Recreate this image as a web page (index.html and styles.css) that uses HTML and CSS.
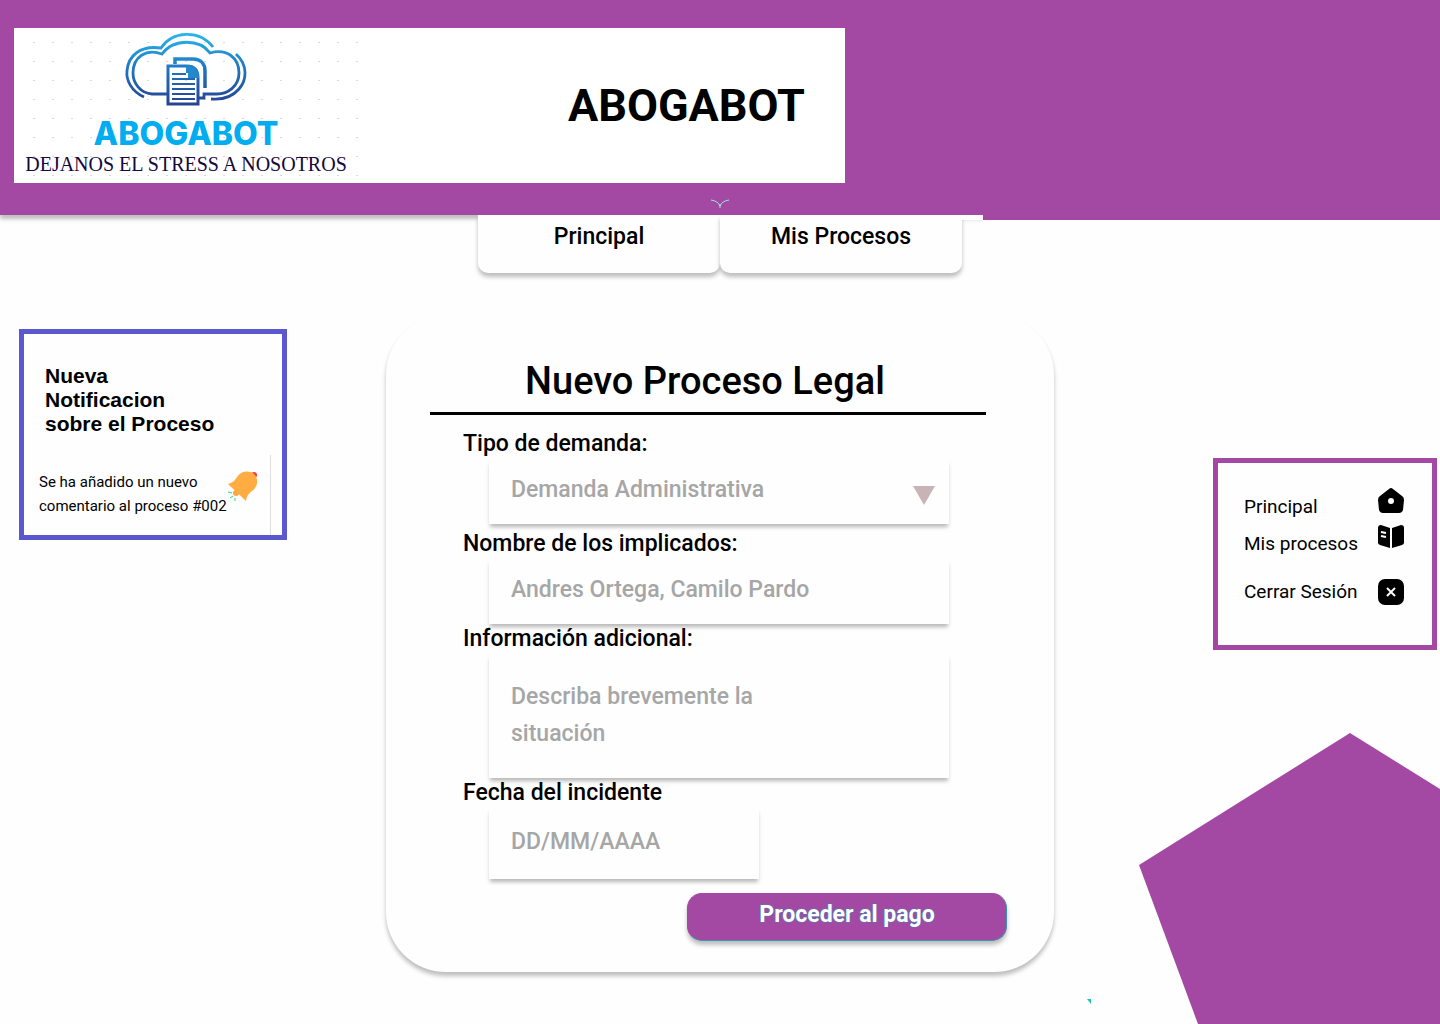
FILE: index.html
```html
<!DOCTYPE html>
<html lang="es">
<head>
<meta charset="utf-8">
<meta name="viewport" content="width=device-width, initial-scale=1">
<title>Abogabot - Nuevo Proceso Legal</title>
<link rel="stylesheet" href="styles.css">
</head>
<body>
<div class="page">
  <header class="header">
    <div class="brand">
      <div class="logo">
        <svg class="logo-mark" viewBox="0 0 132 84" width="132" height="84" aria-hidden="true">
          <defs>
            <linearGradient id="sky" gradientUnits="userSpaceOnUse" x1="0" y1="6" x2="0" y2="78">
              <stop offset="0" stop-color="#29b5ec"/>
              <stop offset="0.5" stop-color="#1f73c0"/>
              <stop offset="1" stop-color="#27408f"/>
            </linearGradient>
          </defs>
          <g fill="none" stroke="url(#sky)" stroke-width="2.8">
            <path d="M24 69C11 63 6 52 7 43C8 28 20 17 41 20C52 3 79 1 93 19"/>
            <path d="M47 66H32C20 65 13 55 13 45C13 29 26 20 42 26C54 10 80 11 90 25C107 20 119 30 119 45C119 58 108 66 97 66H84V70H79"/>
            <path d="M116 26C128 37 127 52 119 61C112 69 102 72 91 71"/>
            <path d="M55 36V31H73C81 31 85 36 85 43V60" stroke-width="3.5"/>
            <path d="M48 60V38H67C75 38 78 43 78 50V76H48V59" stroke-width="3"/>
          </g>
          <path d="M66 37C75 37 79 43 79 50H68V45H66Z" fill="#2488cd"/>
          <path d="M52 46H66M52 51H75M52 56H75M52 61H75M52 66H75M52 71H75" stroke="url(#sky)" stroke-width="2"/>
        </svg>
        <span class="logo-name">ABOGABOT</span>
        <span class="logo-tagline">DEJANOS EL STRESS A NOSOTROS</span>
      </div>
      <h1 class="brand-title">ABOGABOT</h1>
    </div>
    <svg class="header-notch" viewBox="0 0 20 10" width="20" height="10" aria-hidden="true">
      <path d="M1 1Q8 2 10 7Q12 2 19 1M10 5V9" fill="none" stroke="#a5e3e0" stroke-width="1"/>
    </svg>
  </header>

  <nav class="tabs">
    <a class="tab" href="#principal">Principal</a>
    <a class="tab" href="#procesos">Mis Procesos</a>
  </nav>

  <main class="main">
    <aside class="notice">
      <h2 class="notice-title">Nueva<br>Notificacion<br>sobre el Proceso</h2>
      <div class="notice-body">
        <p class="notice-text">Se ha añadido un nuevo<br>comentario al proceso #002</p>
        <svg class="bell" viewBox="0 0 32 32" width="32" height="32" aria-hidden="true">
          <circle cx="27" cy="5" r="3" fill="#f23b4d"/>
          <circle cx="9" cy="23" r="3" fill="#ffa73b"/>
          <path d="M1 14C7 12 8 10 10 7C14 1 22 0 27 4C32 9 31 17 25 21C21 24 20 26 19 31Z" fill="#ffad42"/>
          <path d="M1 22L5 23M3 28L6 26M8 31V28" stroke="#2fd38a" stroke-width="1" fill="none"/>
        </svg>
      </div>
    </aside>

    <form class="form">
      <h2 class="form-title">Nuevo Proceso Legal</h2>
      <div class="field field-type">
        <label for="tipo">Tipo de demanda:</label>
        <div class="select-wrap">
          <select class="control" id="tipo"><option>Demanda Administrativa</option></select>
          <svg class="arrow" viewBox="0 0 22 19" width="22" height="19" aria-hidden="true"><path d="M0 0H22L11 19Z" fill="#c8b4b5"/></svg>
        </div>
      </div>
      <div class="field">
        <label for="nombres">Nombre de los implicados:</label>
        <input class="control" id="nombres" type="text" placeholder="Andres Ortega, Camilo Pardo">
      </div>
      <div class="field">
        <label for="info">Información adicional:</label>
        <textarea class="control control-area" id="info" placeholder="Describa brevemente la situación"></textarea>
      </div>
      <div class="field">
        <label for="fecha">Fecha del incidente</label>
        <input class="control control-date" id="fecha" type="text" placeholder="DD/MM/AAAA">
      </div>
      <button class="submit" type="button">Proceder al pago</button>
    </form>

    <aside class="menu">
      <a class="menu-item" href="#principal">Principal
        <svg viewBox="0 0 26 26" width="26" height="26" aria-hidden="true"><path fill-rule="evenodd" d="M11 1Q13 -1 15 1L24 8Q26 9 26 12L25 22Q24 25 21 25H5Q2 25 1 22L0 12Q0 9 2 8ZM13 10A3 3 0 1 0 13 16A3 3 0 1 0 13 10Z"/></svg>
      </a>
      <a class="menu-item" href="#procesos">Mis procesos
        <svg viewBox="0 0 26 26" width="26" height="26" aria-hidden="true"><path d="M0 3Q0 0 3 0L12 3V23L2 20Q0 19 0 18ZM14 3L23 0Q26 0 26 3V18Q26 19 24 20L14 23Z"/><path d="M3 7L8 8M3 11L8 12" stroke="#fff" stroke-width="2"/></svg>
      </a>
      <a class="menu-item menu-exit" href="#salir">Cerrar Sesión
        <svg viewBox="0 0 26 26" width="26" height="26" aria-hidden="true"><rect width="26" height="26" rx="7"/><path d="M9 9L17 17M17 9L9 17" stroke="#fff" stroke-width="2"/></svg>
      </a>
    </aside>
  </main>

  <svg class="pentagon" viewBox="0 0 301 291" width="301" height="291" aria-hidden="true"><path d="M211 0L301 56V291H59L0 132Z" fill="#a349a3"/></svg>
  <svg class="speck" viewBox="0 0 4 5" width="4" height="5" aria-hidden="true"><path d="M0 0H4V5Z" fill="#14c4b4"/></svg>
</div>
</body>
</html>
```
FILE: styles.css
```css
* { box-sizing: border-box; }

body {
  margin: 0;
  background: #fefefe;
  color: #000;
  font-family: Roboto, "Open Sans", sans-serif;
}

.page {
  position: relative;
  min-height: 100vh;
  overflow: hidden;
}

.header {
  position: relative;
  padding: 28px 14px 32px;
  background: #a349a3;
  box-shadow: 0 4px 4px rgba(0, 0, 0, 0.25);
}

/* the right part of the bar hangs a little lower */
.header::after {
  content: "";
  position: absolute;
  top: 100%;
  right: 0;
  width: 457px;
  height: 5px;
  background: #a349a3;
  box-shadow: 0 4px 0 #fefefe;
}

.brand {
  display: flex;
  align-items: center;
  justify-content: space-between;
  max-width: 831px;
  min-height: 155px;
  padding: 0 40px 0 10px;
  background: #fff;
}

.logo {
  display: flex;
  flex-direction: column;
  align-items: center;
  width: 334px;
  height: 155px;
  padding-right: 10px;
  /* faint grid of small dashes */
  background-image: conic-gradient(from 270deg at 2px 1px, #d9d9d9 90deg, transparent 0);
  background-size: 19px 19px;
  background-position: 9px 14px;
}

.logo-mark { flex: none; }

.logo-name {
  margin-top: 4px;
  color: #00aeef;
  font: 800 32px/36px Inter, sans-serif;
}

.logo-tagline {
  color: #14083c;
  font: 20px/24px "Liberation Serif", serif;
  white-space: nowrap;
}

.brand-title {
  margin: 0;
  font-size: 45px;
  font-weight: 700;
  line-height: 56px;
}

.header-notch {
  position: absolute;
  bottom: 6px;
  left: calc(50% - 10px);
}

.tabs {
  position: relative;
  display: flex;
  width: 484px;
  margin: 0 auto;
}

.tabs::after {
  content: "";
  position: absolute;
  left: 100%;
  width: 21px;
  height: 5px;
  background: #fefefe;
}

.tab {
  flex: 1;
  height: 58px;
  border-radius: 0 0 10px 10px;
  background: #fefefe;
  box-shadow: 0 4px 4px rgba(0, 0, 0, 0.25);
  color: #000;
  font-size: 23px;
  font-weight: 500;
  line-height: 44px;
  text-align: center;
  text-decoration: none;
}

.main {
  position: relative;
  z-index: 1;
  display: grid;
  grid-template-columns: 1fr minmax(auto, 668px) 1fr;
  align-items: start;
  padding: 42px 0 52px;
}

.notice {
  width: 268px;
  margin: 14px 0 0 19px;
  padding: 30px 11px 0 15px;
  border: 5px solid #5b58cf;
}

.notice-title {
  margin: 0 0 0 6px;
  font: 700 21px/24px "Liberation Sans", sans-serif;
}

.notice-body {
  display: flex;
  align-items: flex-start;
  height: 80px;
  margin-top: 19px;
  padding-top: 15px;
  border-right: 1px solid #dedede;
}

.notice-text {
  flex: none;
  width: 188px;
  margin: 0;
  font-size: 15px;
  line-height: 24px;
  white-space: nowrap;
}

.bell { flex: none; }

.form {
  display: flex;
  flex-direction: column;
  min-height: 657px;
  padding: 39px 47px 31px 44px;
  border-radius: 60px;
  background: #fefefe;
  box-shadow: 0 4px 4px rgba(0, 0, 0, 0.25);
}

.form-title {
  width: 556px;
  margin: 0 0 14px;
  padding: 0 6px 4px 0;
  border-bottom: 3px solid #000;
  font-size: 38px;
  font-weight: 500;
  line-height: 54px;
  text-align: center;
}

.field {
  display: flex;
  flex-direction: column;
  padding-left: 33px;
  font-size: 23px;
  font-weight: 500;
  line-height: 30px;
}

.field-type { margin-bottom: 5px; }

.select-wrap { position: relative; width: 460px; margin-left: 26px; }

.control {
  display: block;
  width: 460px;
  height: 65px;
  margin: 0 0 0 26px;
  padding: 0 22px 4px;
  border: 0;
  border-radius: 0;
  outline: 0;
  background: #fefefe;
  box-shadow: 0 4px 4px -1px rgba(0, 0, 0, 0.28);
  color: #a6a6a6;
  font: inherit;
  appearance: none;
  resize: none;
}

.control::placeholder { color: #a6a6a6; opacity: 1; }

.select-wrap .control { margin-left: 0; }

.control-area {
  height: 124px;
  padding: 24px 160px 0 22px;
  line-height: 37px;
}

.control-date { width: 270px; height: 71px; }

.arrow {
  position: absolute;
  top: 27px;
  right: 14px;
  pointer-events: none;
}

.submit {
  align-self: flex-end;
  width: 320px;
  height: 48px;
  margin-top: 14px;
  padding: 0 0 4px;
  border: 1px solid #3f93ad;
  border-top-color: #a349a3;
  border-left-color: #a349a3;
  border-radius: 15px;
  background: #a349a3;
  box-shadow: 0 4px 4px rgba(0, 0, 0, 0.25);
  color: #fff;
  font: 700 23px/30px Roboto, sans-serif;
  text-shadow: 0 0 2px #14a4b4;
}

.menu {
  justify-self: end;
  width: 224px;
  min-height: 192px;
  margin: 143px 3px 0 0;
  padding: 25px 28px 0 26px;
  border: 5px solid #a349a3;
  background: #fefefe;
}

.menu-item {
  display: flex;
  align-items: flex-start;
  justify-content: space-between;
  color: #000;
  font-size: 19px;
  line-height: 37px;
  text-decoration: none;
}

.menu-exit { align-items: center; margin-top: 11px; }

.pentagon { position: absolute; right: 0; bottom: 0; }

.speck { position: absolute; right: 349px; bottom: 20px; }
```
